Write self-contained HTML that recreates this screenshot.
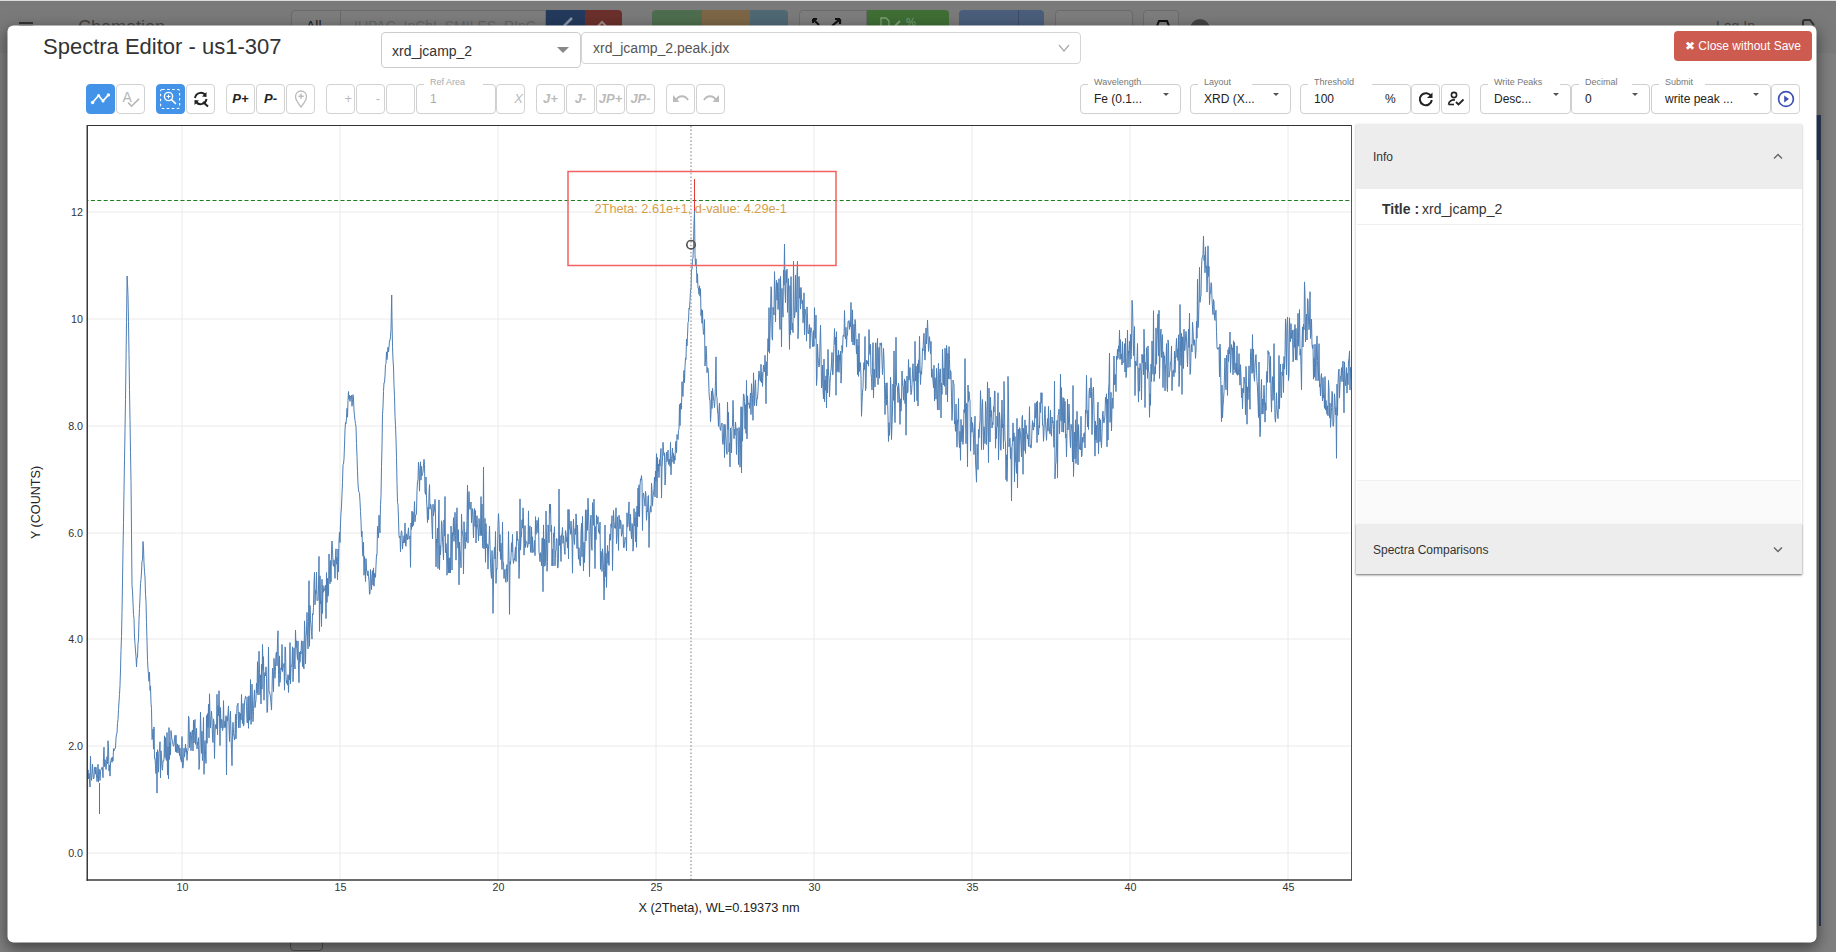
<!DOCTYPE html>
<html><head><meta charset="utf-8">
<style>
*{box-sizing:border-box;margin:0;padding:0}
html,body{width:1836px;height:952px;overflow:hidden}
body{position:relative;background:#7f7f7f;font-family:"Liberation Sans",sans-serif;color:#333}
.a{position:absolute}
.nav{left:0;top:0;width:1836px;height:53px;background:#7a7a7a;border-top:1px solid #dcdcdc}
.modal{left:7px;top:25px;width:1809px;height:917px;transform:translate(0.5px,0.5px);background:#fff;border-radius:6px;box-shadow:0 5px 15px rgba(0,0,0,.5)}
.title{left:43px;top:34px;font-size:22px;line-height:26px;color:#333;white-space:nowrap}
.sel{border:1px solid #ccc;border-radius:4px;background:#fff}
.btn{width:29px;height:30px;border:1px solid #d2d2d2;border-radius:4px;background:#fff;display:flex;align-items:center;justify-content:center}
.btn.on{background:#4394e9;border-color:#4394e9}
.dis{color:#bdbdbd}
.fld{height:30px;border:1px solid #cfcfcf;border-radius:4px;background:#fff}
.lg{position:absolute;top:-7px;font-size:9px;line-height:10px;color:#777;white-space:nowrap}
.gap{position:absolute;top:-2px;height:3px;background:#fff}
.val{position:absolute;top:7px;font-size:12px;line-height:14px;color:#222;white-space:nowrap}
.car{position:absolute;top:8px;width:0;height:0;border-left:3.5px solid transparent;border-right:3.5px solid transparent;border-top:3.5px solid #555}
.ylab{font-size:11px;color:#333;text-align:right;width:40px;line-height:12px}
.xlab{font-size:11px;color:#333;text-align:center;width:40px;line-height:12px}
</style></head><body>
<!-- dimmed background navbar -->
<div class="a nav"></div>
<div class="a" style="left:19px;top:22px;width:14px;height:2px;background:#333;box-shadow:0 3px 0 #333"></div>
<div class="a" style="left:78px;top:17px;font-size:18px;color:#444;line-height:20px">Chemotion</div>
<div class="a" style="left:291px;top:10px;width:255px;height:20px;background:#7d7d7d;border:1px solid #6a6a6a;border-radius:4px 0 0 4px"></div>
<div class="a" style="left:340px;top:10px;width:1px;height:20px;background:#6a6a6a"></div>
<div class="a" style="left:306px;top:18px;font-size:14px;color:#222">All</div>
<div class="a" style="left:354px;top:18px;font-size:14px;color:#666">IUPAC, InChI, SMILES, RInC</div>
<div class="a" style="left:546px;top:10px;width:39px;height:20px;background:#233a5c"></div>
<div class="a" style="left:585px;top:10px;width:37px;height:20px;background:#6b302b;border-radius:0 4px 4px 0"></div>
<div class="a" style="left:652px;top:10px;width:50px;height:20px;background:#4e6d4e;border-radius:4px 0 0 4px"></div>
<div class="a" style="left:702px;top:10px;width:48px;height:20px;background:#7c6646"></div>
<div class="a" style="left:750px;top:10px;width:38px;height:20px;background:#4f6873;border-radius:0 4px 4px 0"></div>
<div class="a" style="left:799px;top:10px;width:68px;height:20px;background:#7d7d7d;border:1px solid #6a6a6a;border-radius:4px 0 0 4px"></div>
<div class="a" style="left:867px;top:10px;width:82px;height:20px;background:#3f6e34;border-radius:0 4px 4px 0"></div>
<div class="a" style="left:959px;top:10px;width:85px;height:20px;background:#4a5e7b;border-radius:4px"></div>
<div class="a" style="left:1018px;top:10px;width:1px;height:20px;background:#3d4d66"></div>
<div class="a" style="left:1055px;top:10px;width:78px;height:20px;background:#7d7d7d;border:1px solid #6a6a6a;border-radius:4px"></div>
<div class="a" style="left:1143px;top:10px;width:36px;height:20px;background:#7d7d7d;border:1px solid #6a6a6a;border-radius:4px"></div>
<div class="a" style="left:1190px;top:19px;width:20px;height:20px;background:#444;border-radius:50%"></div>
<div class="a" style="left:1716px;top:18px;font-size:14px;color:#444">Log In</div>
<svg class="a" style="left:560px;top:14px" width="20" height="12" viewBox="0 0 20 12"><path d="M4 12 L12 4" stroke="#8a96a8" stroke-width="2.5"/></svg>
<svg class="a" style="left:596px;top:18px" width="12" height="8" viewBox="0 0 12 8"><path d="M2 8 L6 4 L10 8" stroke="#a08a88" stroke-width="2" fill="none"/></svg>
<svg class="a" style="left:812px;top:17px" width="32" height="9" viewBox="0 0 32 9"><path d="M1 2 L7 8 M1 2 V6 M1 2 H5" stroke="#111" stroke-width="2"/><path d="M20 9 L28 2 M28 2 V7 M28 2 H23" stroke="#111" stroke-width="2.2"/></svg>
<svg class="a" style="left:880px;top:17px" width="45" height="9" viewBox="0 0 45 9"><path d="M1 9 V1 H6 L9 4 V9" stroke="#7fa07a" stroke-width="1.3" fill="none"/><path d="M15 9 L20 4" stroke="#7fa07a" stroke-width="2"/><text x="26" y="9" font-family="Liberation Sans" font-size="11" fill="#7fa07a">%</text></svg>
<svg class="a" style="left:1155px;top:20px" width="16" height="6" viewBox="0 0 16 6"><path d="M2 6 L4 1 H12 L14 6" stroke="#111" stroke-width="2" fill="none"/></svg>
<svg class="a" style="left:1800px;top:19px" width="16" height="8" viewBox="0 0 16 8"><path d="M3 8 V3 Q3 1 5 1 H10 L14 6" stroke="#333" stroke-width="2" fill="none"/></svg>
<!-- right blue panel behind -->
<div class="a" style="left:1812px;top:115px;width:9px;height:811px;border-right:2px solid #2a3d5c;background:#7a7a7a"></div>
<div class="a" style="left:1812px;top:115px;width:9px;height:45px;background:#2a3d5c;border-radius:0 4px 0 0"></div>
<div class="a" style="left:290px;top:938px;width:33px;height:13px;border:1px solid #505050;border-radius:0 0 4px 4px"></div>

<div class="a modal"></div>
<div class="a title">Spectra Editor - us1-307</div>

<div class="a sel" style="left:381px;top:32px;width:200px;height:36px"><div class="val" style="left:10px;top:10px;font-size:14px;line-height:16px;color:#333">xrd_jcamp_2</div><div class="car" style="left:175px;top:14px;border-left-width:6px;border-right-width:6px;border-top-width:6px;border-top-color:#888"></div></div>
<div class="a sel" style="left:581px;top:32px;width:500px;height:32px;border-color:#d5d5d5"><div class="val" style="left:11px;top:7px;font-size:14px;line-height:16px;color:#555">xrd_jcamp_2.peak.jdx</div>
<svg class="a" style="left:476px;top:11px" width="12" height="9" viewBox="0 0 12 9"><path d="M1 1 L6 7 L11 1" fill="none" stroke="#aaa" stroke-width="1.2"/></svg></div>

<div class="a" style="left:1674px;top:31px;width:138px;height:30px;background:#cd5b50;border-radius:4px;color:#fff;font-size:12px;line-height:30px;text-align:center;white-space:nowrap">&#10006; Close without Save</div>

<div class="a btn on" style="left:86px;top:84px"><svg width="27" height="28" viewBox="0 0 27 28" style="position:absolute;left:0;top:0"><path d="M5.6 17.5 L11.6 10.5 L16 16 L21.4 9.9" fill="none" stroke="#fff" stroke-width="1.7" stroke-linejoin="round"/><circle cx="5.6" cy="17.5" r="1.7" fill="#fff"/><circle cx="11.6" cy="10.5" r="1.5" fill="#fff"/><circle cx="16" cy="16" r="1.5" fill="#fff"/><circle cx="21.4" cy="9.9" r="1.7" fill="#fff"/></svg></div>
<div class="a btn " style="left:116px;top:84px"><svg width="27" height="28" viewBox="0 0 27 28" style="position:absolute;left:0;top:0"><text x="5.6" y="16.8" font-family="Liberation Sans" font-size="14" fill="#b5b5b5">A</text><path d="M11.2 17.6 L14.6 21.2 L22 13.9" fill="none" stroke="#b5b5b5" stroke-width="1.6"/></svg></div>
<div class="a btn on" style="left:156px;top:84px"><svg width="27" height="28" viewBox="0 0 27 28" style="position:absolute;left:0;top:0"><rect x="3.6" y="4.5" width="19" height="19" rx="1.5" fill="none" stroke="#fff" stroke-width="1.1" stroke-dasharray="2.6 2.4"/><circle cx="11.5" cy="11.5" r="4.1" fill="none" stroke="#fff" stroke-width="1.4"/><path d="M14.4 14.6 L18.9 18.9" stroke="#fff" stroke-width="1.5"/><path d="M11.5 9.6 V13.4 M9.6 11.5 H13.4" stroke="#fff" stroke-width="1"/></svg></div>
<div class="a btn " style="left:186px;top:84px"><svg width="20" height="20" viewBox="0 0 20 20"><path d="M4 9 A6 6 0 0 1 14.5 6" fill="none" stroke="#222" stroke-width="2"/><path d="M15.5 3 L15.5 8 L11 7.5 Z" fill="#222"/><path d="M15.5 10 A6 6 0 0 1 5 13" fill="none" stroke="#222" stroke-width="2"/><path d="M3.5 16 L3.5 11 L8 11.5 Z" fill="#222"/><path d="M12 13 L17 17.5" stroke="#222" stroke-width="2"/></svg></div>
<div class="a btn " style="left:226px;top:84px"><span style="position:relative;top:-1px;font-size:13px;color:#222;font-style:italic;font-weight:bold;white-space:nowrap">P+</span></div>
<div class="a btn " style="left:256px;top:84px"><span style="position:relative;top:-1px;font-size:13px;color:#222;font-style:italic;font-weight:bold;white-space:nowrap">P-</span></div>
<div class="a btn " style="left:286px;top:84px"><svg width="16" height="20" viewBox="0 0 16 20"><path d="M8 18 C4 13 2.5 10.5 2.5 7.5 A5.5 5.5 0 0 1 13.5 7.5 C13.5 10.5 12 13 8 18 Z" fill="none" stroke="#bbb" stroke-width="1.3"/><path d="M8 4.5 V10 M5.3 7.3 H10.7" stroke="#bbb" stroke-width="1.4"/></svg></div>
<div class="a btn" style="left:326px;top:84px;justify-content:flex-end;padding-right:2px"><span style="position:relative;top:-1px;font-size:13px;color:#bbb;font-style:normal;font-weight:normal;white-space:nowrap">+</span></div>
<div class="a btn" style="left:356px;top:84px;justify-content:flex-end;padding-right:4px"><span style="position:relative;top:-1px;font-size:13px;color:#bbb;font-style:normal;font-weight:normal;white-space:nowrap">-</span></div>
<div class="a btn " style="left:386px;top:84px"></div>
<div class="a fld" style="left:416px;top:84px;width:80px"><div class="gap" style="left:7px;width:58.5px"></div><div class="lg" style="left:13px;top:-8px;color:#aaa">Ref Area</div><div class="val" style="left:13px;top:7px;color:#aaa">1</div></div>
<div class="a btn" style="left:496px;top:84px;justify-content:flex-end;padding-right:1px"><span style="position:relative;top:-1px;font-size:13px;color:#bbb;font-style:italic;font-weight:normal;white-space:nowrap">X</span></div>
<div class="a btn " style="left:536px;top:84px"><span style="position:relative;top:-1px;font-size:13px;color:#bbb;font-style:italic;font-weight:bold;white-space:nowrap">J+</span></div>
<div class="a btn " style="left:566px;top:84px"><span style="position:relative;top:-1px;font-size:13px;color:#bbb;font-style:italic;font-weight:bold;white-space:nowrap">J-</span></div>
<div class="a btn " style="left:596px;top:84px"><span style="position:relative;top:-1px;font-size:13px;color:#bbb;font-style:italic;font-weight:bold;white-space:nowrap">JP+</span></div>
<div class="a btn " style="left:626px;top:84px"><span style="position:relative;top:-1px;font-size:13px;color:#bbb;font-style:italic;font-weight:bold;white-space:nowrap">JP-</span></div>
<div class="a btn " style="left:666px;top:84px"><svg width="20" height="12" viewBox="0 0 20 12"><path d="M5 7 C8 2 14 2 17 7" fill="none" stroke="#bbb" stroke-width="2"/><path d="M2 2 L2 9 L8.5 9 Z" fill="#bbb"/></svg></div>
<div class="a btn " style="left:696px;top:84px"><svg width="20" height="12" viewBox="0 0 20 12"><path d="M15 7 C12 2 6 2 3 7" fill="none" stroke="#bbb" stroke-width="2"/><path d="M18 2 L18 9 L11.5 9 Z" fill="#bbb"/></svg></div>
<div class="a fld" style="left:1080px;top:84px;width:101px"><div class="gap" style="left:7px;width:53.4px"></div><div class="lg" style="left:13px;top:-8px;color:#777">Wavelength</div><div class="val" style="left:13px;top:7px;color:#222">Fe (0.1...</div><div class="car" style="left:82px;top:7.5px"></div></div>
<div class="a fld" style="left:1190px;top:84px;width:101px"><div class="gap" style="left:7px;width:53.7px"></div><div class="lg" style="left:13px;top:-8px;color:#777">Layout</div><div class="val" style="left:13px;top:7px;color:#222">XRD (X...</div><div class="car" style="left:82px;top:7.5px"></div></div>
<div class="a fld" style="left:1300px;top:84px;width:111px"><div class="gap" style="left:7px;width:64.1px"></div><div class="lg" style="left:13px;top:-8px;color:#777">Threshold</div><div class="val" style="left:13px;top:7px;color:#222">100</div><div class="val" style="left:84px;top:7px">%</div></div>
<div class="a btn " style="left:1411px;top:84px"><svg width="18" height="18" viewBox="0 0 18 18"><path d="M14.2 6.5 A6 6 0 1 0 14.8 10" fill="none" stroke="#222" stroke-width="2"/><path d="M15.5 2.5 V8 H10 Z" fill="#222"/></svg></div>
<div class="a btn " style="left:1441px;top:84px"><svg width="18" height="16" viewBox="0 0 18 16"><circle cx="7" cy="4" r="2.6" fill="none" stroke="#222" stroke-width="1.6"/><path d="M1.5 13.5 C2 10 5 8.5 8 9" fill="none" stroke="#222" stroke-width="1.6"/><path d="M1.5 13.5 H7" stroke="#222" stroke-width="1.6"/><path d="M9 11 L11.5 13.5 L16.5 8.5" fill="none" stroke="#222" stroke-width="1.8"/></svg></div>
<div class="a fld" style="left:1480px;top:84px;width:91px"><div class="gap" style="left:7px;width:72px"></div><div class="lg" style="left:13px;top:-8px;color:#777">Write Peaks</div><div class="val" style="left:13px;top:7px;color:#222">Desc...</div><div class="car" style="left:72px;top:7.5px"></div></div>
<div class="a fld" style="left:1571px;top:84px;width:79px"><div class="gap" style="left:7px;width:53px"></div><div class="lg" style="left:13px;top:-8px;color:#777">Decimal</div><div class="val" style="left:13px;top:7px;color:#222">0</div><div class="car" style="left:60px;top:7.5px"></div></div>
<div class="a fld" style="left:1651px;top:84px;width:120px"><div class="gap" style="left:7px;width:46.2px"></div><div class="lg" style="left:13px;top:-8px;color:#777">Submit</div><div class="val" style="left:13px;top:7px;color:#222">write peak ...</div><div class="car" style="left:101px;top:7.5px"></div></div>
<div class="a btn " style="left:1771px;top:84px"><svg width="20" height="20" viewBox="0 0 20 20"><circle cx="10" cy="10" r="7.4" fill="none" stroke="#3f51b5" stroke-width="1.7"/><path d="M8.2 6.6 L13 10 L8.2 13.4 Z" fill="#3f51b5"/></svg></div>

<svg class="a" style="left:0;top:0" width="1836" height="952" viewBox="0 0 1836 952">
<line x1="87" y1="212" x2="1352" y2="212" stroke="#eaeaea" stroke-width="1"/>
<line x1="87" y1="319" x2="1352" y2="319" stroke="#eaeaea" stroke-width="1"/>
<line x1="87" y1="426" x2="1352" y2="426" stroke="#eaeaea" stroke-width="1"/>
<line x1="87" y1="533" x2="1352" y2="533" stroke="#eaeaea" stroke-width="1"/>
<line x1="87" y1="639" x2="1352" y2="639" stroke="#eaeaea" stroke-width="1"/>
<line x1="87" y1="746" x2="1352" y2="746" stroke="#eaeaea" stroke-width="1"/>
<line x1="87" y1="853" x2="1352" y2="853" stroke="#eaeaea" stroke-width="1"/>
<line x1="182" y1="126" x2="182" y2="880" stroke="#eaeaea" stroke-width="1"/>
<line x1="340" y1="126" x2="340" y2="880" stroke="#eaeaea" stroke-width="1"/>
<line x1="498" y1="126" x2="498" y2="880" stroke="#eaeaea" stroke-width="1"/>
<line x1="656" y1="126" x2="656" y2="880" stroke="#eaeaea" stroke-width="1"/>
<line x1="814" y1="126" x2="814" y2="880" stroke="#eaeaea" stroke-width="1"/>
<line x1="972" y1="126" x2="972" y2="880" stroke="#eaeaea" stroke-width="1"/>
<line x1="1130" y1="126" x2="1130" y2="880" stroke="#eaeaea" stroke-width="1"/>
<line x1="1288" y1="126" x2="1288" y2="880" stroke="#eaeaea" stroke-width="1"/>
<text x="83" y="215.6" text-anchor="end" font-family="Liberation Sans" font-size="10.7" fill="#333">12</text>
<text x="83" y="322.6" text-anchor="end" font-family="Liberation Sans" font-size="10.7" fill="#333">10</text>
<text x="83" y="429.6" text-anchor="end" font-family="Liberation Sans" font-size="10.7" fill="#333">8.0</text>
<text x="83" y="536.6" text-anchor="end" font-family="Liberation Sans" font-size="10.7" fill="#333">6.0</text>
<text x="83" y="642.6" text-anchor="end" font-family="Liberation Sans" font-size="10.7" fill="#333">4.0</text>
<text x="83" y="749.6" text-anchor="end" font-family="Liberation Sans" font-size="10.7" fill="#333">2.0</text>
<text x="83" y="856.6" text-anchor="end" font-family="Liberation Sans" font-size="10.7" fill="#333">0.0</text>
<text x="182.5" y="891" text-anchor="middle" font-family="Liberation Sans" font-size="10.7" fill="#333">10</text>
<text x="340.5" y="891" text-anchor="middle" font-family="Liberation Sans" font-size="10.7" fill="#333">15</text>
<text x="498.5" y="891" text-anchor="middle" font-family="Liberation Sans" font-size="10.7" fill="#333">20</text>
<text x="656.5" y="891" text-anchor="middle" font-family="Liberation Sans" font-size="10.7" fill="#333">25</text>
<text x="814.5" y="891" text-anchor="middle" font-family="Liberation Sans" font-size="10.7" fill="#333">30</text>
<text x="972.5" y="891" text-anchor="middle" font-family="Liberation Sans" font-size="10.7" fill="#333">35</text>
<text x="1130.5" y="891" text-anchor="middle" font-family="Liberation Sans" font-size="10.7" fill="#333">40</text>
<text x="1288.5" y="891" text-anchor="middle" font-family="Liberation Sans" font-size="10.7" fill="#333">45</text>
<text x="719" y="912" text-anchor="middle" font-family="Liberation Sans" font-size="12.75" fill="#222">X (2Theta), WL=0.19373 nm</text>
<text transform="translate(39.5,502.5) rotate(-90)" text-anchor="middle" font-family="Liberation Sans" font-size="12.6" fill="#222">Y (COUNTS)</text>
<line x1="87" y1="200.5" x2="1352" y2="200.5" stroke="#1d7d1d" stroke-width="1.2" stroke-dasharray="4 2.4" stroke-dashoffset="2.5"/>
<path d="M87.5 778.9 L88.0 769.9 L88.5 778.9 L89.0 773.4 L89.5 779.6 L90.0 787.0 L90.5 756.0 L91.0 776.1 L91.5 780.4 L92.0 774.3 L92.5 764.1 L93.0 773.4 L93.5 778.9 L94.0 778.0 L94.5 768.0 L95.0 766.9 L95.5 774.2 L96.0 767.3 L96.5 776.0 L97.0 781.6 L97.5 778.7 L98.0 764.3 L98.5 782.2 L99.0 769.1 L99.5 770.4 L100.0 780.5 L100.5 771.4 L101.0 769.7 L101.5 769.1 L102.0 767.2 L102.5 769.1 L103.0 777.7 L103.5 756.7 L104.0 747.2 L104.5 766.6 L105.0 759.6 L105.5 762.6 L106.0 769.5 L106.5 763.6 L107.0 756.8 L107.5 763.7 L108.0 740.7 L108.5 747.7 L109.0 770.9 L109.5 765.2 L110.0 776.1 L110.5 762.9 L111.0 760.5 L111.5 757.8 L112.0 762.4 L112.5 757.2 L113.0 761.0 L113.5 748.6 L114.0 750.9 L114.5 749.5 L115.0 748.1 L115.5 748.1 L116.0 738.2 L116.5 734.1 L117.0 733.1 L117.5 723.4 L118.0 719.6 L118.5 709.5 L119.0 702.1 L119.5 694.4 L120.0 685.4 L120.5 670.0 L121.0 650.4 L121.5 636.6 L122.0 611.7 L122.5 582.1 L123.0 549.4 L123.5 522.4 L124.0 490.4 L124.5 459.8 L125.0 430.4 L125.5 399.3 L126.0 361.2 L126.5 322.5 L127.1 276.0 L127.5 283.7 L128.0 295.6 L128.5 321.7 L129.0 354.4 L129.5 389.3 L130.0 420.4 L130.5 452.3 L131.0 480.5 L131.5 533.4 L132.0 585.4 L132.5 591.1 L133.0 602.5 L133.5 614.5 L134.0 618.8 L134.5 637.0 L135.0 643.7 L135.5 650.9 L136.0 656.5 L136.5 666.9 L137.0 657.4 L137.5 657.3 L138.0 643.7 L138.5 639.1 L139.0 619.5 L139.5 608.6 L140.0 597.3 L140.5 583.7 L141.0 579.5 L141.5 572.0 L142.0 561.3 L142.5 559.8 L143.0 541.5 L143.5 547.9 L144.0 563.0 L144.5 571.4 L145.0 577.0 L145.5 594.2 L146.0 601.3 L146.5 622.7 L147.0 640.9 L147.5 660.3 L148.0 668.8 L148.5 674.9 L149.0 681.3 L149.5 672.2 L150.0 690.4 L150.5 685.9 L151.0 702.9 L151.5 708.3 L152.0 739.5 L152.5 737.7 L153.0 729.1 L153.5 749.1 L154.0 726.9 L154.5 758.7 L155.0 758.2 L155.5 765.7 L156.0 773.6 L156.5 752.2 L157.0 793.1 L157.5 749.7 L158.0 754.1 L158.5 772.2 L159.0 751.8 L159.5 751.1 L160.0 741.8 L160.5 777.9 L161.0 750.7 L161.5 756.7 L162.0 767.6 L162.5 770.2 L163.0 760.8 L163.5 761.4 L164.0 758.9 L164.5 735.8 L165.0 757.5 L165.5 737.6 L166.0 759.1 L166.5 760.5 L167.0 732.5 L167.5 775.1 L168.0 746.9 L168.5 778.9 L169.0 727.6 L169.5 759.4 L170.0 742.1 L170.5 754.8 L171.0 730.6 L171.5 736.1 L172.0 739.7 L172.5 741.1 L173.0 744.8 L173.5 746.3 L174.0 744.8 L174.5 737.7 L175.0 735.3 L175.5 751.6 L176.0 735.3 L176.5 752.4 L177.0 751.0 L177.5 743.9 L178.0 753.1 L178.5 745.4 L179.0 744.9 L179.5 755.7 L180.0 747.9 L180.5 759.4 L181.0 759.9 L181.5 762.2 L182.0 736.5 L182.5 767.8 L183.0 768.2 L183.5 762.3 L184.0 748.2 L184.5 757.1 L185.0 752.2 L185.5 744.0 L186.0 752.2 L186.5 748.6 L187.0 760.4 L187.5 751.1 L188.0 750.7 L188.5 716.1 L189.0 718.3 L189.5 747.6 L190.0 734.5 L190.5 731.9 L191.0 750.7 L191.5 735.5 L192.0 731.5 L192.5 730.1 L193.0 751.0 L193.5 720.1 L194.0 743.0 L194.5 723.8 L195.0 719.5 L195.5 744.4 L196.0 735.6 L196.5 728.4 L197.0 748.9 L197.5 742.2 L198.0 744.3 L198.5 737.7 L199.0 769.5 L199.5 764.5 L200.0 744.8 L200.5 712.2 L201.0 733.2 L201.5 753.3 L202.0 731.3 L202.5 760.5 L203.0 740.1 L203.5 717.5 L204.0 774.3 L204.5 751.9 L205.0 740.6 L205.5 754.1 L206.0 763.4 L206.5 715.5 L207.0 743.3 L207.5 713.6 L208.0 727.4 L208.5 704.3 L209.0 737.9 L209.5 693.8 L210.0 715.8 L210.5 728.1 L211.0 718.7 L211.5 711.2 L212.0 719.8 L212.5 737.1 L213.0 742.5 L213.5 718.9 L214.0 722.7 L214.5 758.5 L215.0 733.0 L215.5 724.6 L216.0 728.7 L216.5 728.6 L217.0 694.3 L217.5 734.7 L218.0 705.8 L218.5 715.7 L219.0 690.7 L219.5 713.5 L220.0 745.6 L220.5 707.5 L221.0 728.0 L221.5 719.5 L222.0 719.5 L222.5 730.6 L223.0 727.9 L223.5 700.7 L224.0 727.8 L224.5 726.4 L225.0 720.9 L225.5 727.4 L226.0 715.7 L226.5 775.0 L227.0 717.1 L227.5 721.1 L228.0 713.1 L228.5 705.9 L229.0 725.9 L229.5 741.5 L230.0 719.8 L230.5 711.2 L231.0 735.4 L231.5 749.4 L232.0 765.7 L232.5 732.5 L233.0 722.3 L233.5 733.3 L234.0 736.4 L234.5 740.1 L235.0 733.6 L235.5 714.1 L236.0 738.9 L236.5 720.6 L237.0 705.4 L237.5 705.4 L238.0 703.2 L238.5 728.0 L239.0 712.1 L239.5 714.4 L240.0 727.8 L240.5 713.5 L241.0 719.9 L241.5 694.5 L242.0 717.2 L242.5 723.5 L243.0 703.5 L243.5 726.1 L244.0 724.5 L244.5 700.6 L245.0 699.2 L245.5 696.3 L246.0 696.6 L246.5 706.4 L247.0 722.4 L247.5 722.9 L248.0 696.8 L248.5 728.3 L249.0 695.8 L249.5 720.3 L250.0 719.4 L250.5 679.6 L251.0 724.4 L251.5 715.6 L252.0 684.2 L252.5 705.1 L253.0 721.6 L253.5 711.4 L254.0 698.9 L254.5 689.9 L255.0 707.6 L255.5 703.9 L256.0 699.6 L256.5 683.0 L257.0 693.0 L257.5 661.7 L258.0 695.0 L258.5 683.5 L259.0 651.2 L259.5 672.3 L260.0 694.8 L260.5 674.9 L261.0 703.9 L261.5 664.3 L262.0 689.2 L262.5 644.5 L263.0 670.1 L263.5 656.7 L264.0 700.2 L264.5 674.5 L265.0 672.5 L265.5 676.0 L266.0 666.9 L266.5 678.8 L267.0 712.5 L267.5 711.8 L268.0 690.3 L268.5 647.1 L269.0 691.1 L269.5 692.0 L270.0 694.1 L270.5 697.2 L271.0 702.9 L271.5 710.1 L272.0 690.6 L272.5 668.1 L273.0 673.9 L273.5 691.8 L274.0 658.4 L274.5 671.6 L275.0 678.2 L275.5 666.6 L276.0 653.9 L276.5 652.0 L277.0 665.9 L277.5 641.1 L278.0 630.8 L278.5 674.5 L279.0 686.5 L279.5 655.9 L280.0 682.3 L280.5 675.6 L281.0 667.9 L281.5 670.0 L282.0 644.5 L282.5 671.6 L283.0 667.3 L283.5 665.7 L284.0 663.5 L284.5 690.2 L285.0 646.9 L285.5 647.8 L286.0 676.7 L286.5 683.3 L287.0 680.3 L287.5 685.1 L288.0 674.6 L288.5 692.5 L289.0 675.7 L289.5 679.8 L290.0 642.6 L290.5 683.9 L291.0 667.6 L291.5 665.8 L292.0 664.0 L292.5 646.8 L293.0 681.7 L293.5 668.5 L294.0 647.8 L294.5 664.6 L295.0 669.0 L295.5 630.0 L296.0 647.6 L296.5 640.8 L297.0 653.3 L297.5 659.6 L298.0 640.9 L298.5 669.2 L299.0 682.7 L299.5 652.3 L300.0 662.2 L300.5 651.3 L301.0 654.0 L301.5 640.8 L302.0 647.2 L302.5 666.5 L303.0 640.9 L303.5 667.0 L304.0 668.9 L304.5 620.9 L305.0 634.4 L305.5 663.9 L306.0 638.0 L306.5 630.9 L307.0 612.4 L307.5 636.8 L308.0 648.9 L308.5 621.4 L309.0 580.7 L309.5 646.3 L310.0 605.5 L310.5 619.6 L311.0 625.0 L311.5 631.6 L312.0 639.1 L312.5 613.7 L313.0 615.0 L313.5 607.3 L314.0 583.0 L314.5 572.3 L315.0 604.8 L315.5 590.3 L316.0 593.7 L316.5 572.1 L317.0 600.7 L317.5 600.3 L318.0 600.5 L318.5 587.0 L319.0 556.4 L319.5 631.4 L320.0 575.8 L320.5 604.0 L321.0 600.7 L321.5 626.6 L322.0 579.3 L322.5 613.4 L323.0 585.5 L323.5 592.2 L324.0 589.7 L324.5 590.3 L325.0 586.6 L325.5 585.1 L326.0 618.6 L326.5 572.6 L327.0 602.4 L327.5 578.4 L328.0 596.3 L328.5 593.1 L329.0 554.0 L329.5 575.4 L330.0 583.8 L330.5 560.6 L331.0 581.8 L331.5 551.1 L332.0 541.0 L332.5 549.6 L333.0 564.0 L333.5 566.3 L334.0 559.8 L334.5 563.5 L335.0 578.4 L335.5 555.7 L336.0 548.8 L336.5 564.2 L337.0 557.6 L337.5 580.0 L338.0 549.0 L338.5 571.8 L339.0 540.5 L339.5 532.0 L340.0 542.6 L340.5 523.9 L341.0 512.7 L341.5 506.1 L342.0 493.8 L342.5 482.8 L343.0 464.8 L343.5 464.1 L344.0 458.9 L344.5 445.0 L345.0 429.9 L345.5 422.6 L346.0 423.6 L346.5 417.8 L347.0 408.3 L347.5 417.2 L348.0 400.4 L348.5 391.5 L349.0 399.3 L349.5 395.1 L350.0 401.4 L350.5 396.1 L351.0 396.6 L351.5 395.3 L352.0 406.2 L352.5 399.6 L353.0 394.7 L353.5 399.0 L354.0 411.0 L354.5 415.9 L355.0 420.5 L355.5 423.7 L356.0 426.9 L356.5 443.6 L357.0 456.5 L357.5 471.2 L358.0 483.9 L358.5 489.9 L359.0 492.3 L359.5 493.2 L360.0 501.7 L360.5 511.4 L361.0 521.2 L361.5 537.0 L362.0 531.2 L362.5 550.1 L363.0 556.3 L363.5 542.2 L364.0 575.2 L364.5 556.5 L365.0 567.3 L365.5 581.5 L366.0 558.6 L366.5 570.1 L367.0 571.8 L367.5 575.5 L368.0 570.8 L368.5 576.2 L369.0 580.8 L369.5 594.3 L370.0 593.3 L370.5 569.5 L371.0 578.2 L371.5 589.7 L372.0 577.2 L372.5 570.6 L373.0 585.0 L373.5 567.9 L374.0 586.2 L374.5 573.4 L375.0 577.6 L375.5 577.2 L376.0 565.1 L376.5 554.9 L377.0 555.3 L377.5 526.4 L378.0 532.4 L378.5 537.8 L379.0 515.2 L379.5 527.6 L380.0 532.9 L380.5 504.7 L381.0 495.8 L381.5 466.6 L382.0 446.1 L382.5 414.5 L383.0 406.9 L383.5 391.4 L384.0 382.5 L384.5 382.7 L385.0 375.9 L385.5 364.7 L386.0 363.4 L386.5 351.9 L387.0 359.6 L387.5 352.9 L388.0 347.2 L388.5 352.1 L389.0 347.2 L389.5 340.5 L390.0 340.7 L390.5 336.1 L391.0 329.5 L391.7 295.0 L392.0 318.5 L392.5 346.8 L393.0 359.9 L393.5 367.0 L394.0 385.5 L394.5 396.2 L395.0 416.5 L395.5 425.4 L396.0 439.0 L396.5 457.6 L397.0 483.4 L397.5 502.5 L398.0 504.4 L398.5 519.1 L399.0 535.9 L399.5 538.0 L400.0 536.0 L400.5 551.8 L401.0 534.0 L401.5 530.8 L402.0 533.1 L402.5 549.1 L403.0 541.5 L403.5 542.9 L404.0 535.7 L404.5 542.6 L405.0 523.0 L405.5 545.5 L406.0 546.3 L406.5 533.9 L407.0 536.3 L407.5 539.7 L408.0 533.0 L408.5 527.8 L409.0 539.1 L409.5 537.2 L410.0 535.8 L410.5 567.3 L411.0 523.0 L411.5 529.4 L412.0 511.1 L412.5 526.8 L413.0 512.3 L413.5 525.3 L414.0 515.6 L414.5 501.5 L415.0 521.7 L415.5 515.2 L416.0 515.2 L416.5 513.8 L417.0 490.9 L417.5 481.2 L418.0 480.0 L418.5 462.1 L419.0 470.8 L419.5 491.2 L420.0 470.1 L420.5 461.8 L421.0 480.1 L421.5 466.4 L422.0 475.8 L422.5 473.6 L423.0 472.4 L423.5 465.1 L424.0 459.3 L424.5 464.7 L425.0 491.9 L425.5 494.4 L426.0 477.0 L426.5 498.7 L427.0 508.3 L427.5 522.5 L428.0 507.1 L428.5 519.5 L429.0 493.8 L429.5 484.6 L430.0 509.2 L430.5 504.1 L431.0 505.1 L431.5 511.1 L432.0 527.1 L432.5 539.0 L433.0 504.2 L433.5 515.9 L434.0 512.3 L434.5 508.9 L435.0 499.4 L435.5 513.8 L436.0 566.8 L436.5 539.2 L437.0 542.2 L437.5 528.1 L438.0 568.5 L438.5 521.1 L439.0 499.9 L439.5 569.7 L440.0 545.4 L440.5 554.9 L441.0 542.6 L441.5 520.8 L442.0 523.9 L442.5 540.0 L443.0 548.3 L443.5 559.8 L444.0 519.9 L444.5 536.1 L445.0 496.5 L445.5 552.7 L446.0 543.4 L446.5 551.1 L447.0 575.2 L447.5 561.4 L448.0 534.1 L448.5 573.0 L449.0 558.1 L449.5 572.6 L450.0 557.6 L450.5 573.0 L451.0 526.1 L451.5 539.7 L452.0 570.0 L452.5 532.6 L453.0 535.3 L453.5 517.7 L454.0 541.4 L454.5 530.1 L455.0 512.3 L455.5 535.7 L456.0 560.1 L456.5 522.2 L457.0 507.8 L457.5 538.1 L458.0 548.3 L458.5 529.7 L459.0 584.8 L459.5 542.0 L460.0 550.3 L460.5 555.7 L461.0 567.8 L461.5 514.2 L462.0 529.2 L462.5 533.1 L463.0 537.0 L463.5 574.0 L464.0 521.7 L464.5 536.3 L465.0 548.8 L465.5 547.9 L466.0 532.1 L466.5 541.5 L467.0 520.5 L467.5 485.1 L468.0 543.1 L468.5 505.8 L469.0 491.6 L469.5 506.5 L470.0 509.5 L470.5 508.5 L471.0 502.0 L471.5 522.7 L472.0 508.7 L472.5 508.8 L473.0 522.1 L473.5 538.0 L474.0 511.8 L474.5 508.5 L475.0 526.7 L475.5 510.5 L476.0 543.0 L476.5 523.6 L477.0 515.7 L477.5 527.6 L478.0 529.2 L478.5 540.7 L479.0 518.5 L479.5 523.6 L480.0 535.8 L480.5 533.0 L481.0 496.6 L481.5 535.5 L482.0 504.1 L482.5 542.4 L483.0 548.2 L483.5 467.0 L484.0 548.8 L484.5 539.4 L485.0 518.4 L485.5 562.3 L486.0 523.6 L486.5 547.8 L487.0 543.7 L487.5 546.6 L488.0 569.1 L488.5 547.0 L489.0 543.2 L489.5 526.1 L490.0 545.2 L490.5 562.1 L491.0 573.7 L491.5 578.4 L492.0 550.5 L492.5 563.1 L493.0 613.4 L493.5 578.7 L494.0 554.4 L494.5 547.2 L495.0 559.0 L495.5 531.5 L496.0 583.4 L496.5 568.4 L497.0 569.2 L497.5 551.7 L498.0 525.3 L498.5 513.6 L499.0 523.6 L499.5 551.3 L500.0 534.5 L500.5 559.4 L501.0 543.1 L501.5 555.0 L502.0 569.5 L502.5 522.0 L503.0 563.2 L503.5 562.8 L504.0 578.5 L504.5 572.0 L505.0 569.3 L505.5 581.7 L506.0 582.4 L506.5 567.7 L507.0 564.5 L507.5 581.5 L508.0 564.6 L508.5 531.5 L509.0 557.2 L509.5 614.4 L510.0 561.7 L510.5 564.3 L511.0 556.7 L511.5 542.8 L512.0 552.1 L512.5 534.4 L513.0 558.9 L513.5 563.4 L514.0 559.0 L514.5 560.1 L515.0 553.2 L515.5 546.9 L516.0 561.5 L516.5 541.0 L517.0 531.1 L517.5 540.3 L518.0 539.2 L518.5 546.6 L519.0 578.5 L519.5 563.3 L520.0 498.9 L520.5 550.1 L521.0 538.8 L521.5 535.0 L522.0 519.8 L522.5 528.2 L523.0 507.8 L523.5 517.6 L524.0 555.1 L524.5 543.3 L525.0 525.6 L525.5 547.4 L526.0 541.5 L526.5 541.4 L527.0 542.4 L527.5 547.5 L528.0 545.0 L528.5 510.9 L529.0 544.0 L529.5 527.9 L530.0 525.9 L530.5 552.3 L531.0 546.8 L531.5 527.1 L532.0 552.7 L532.5 536.8 L533.0 552.5 L533.5 551.5 L534.0 549.0 L534.5 540.5 L535.0 555.7 L535.5 516.7 L536.0 534.4 L536.5 528.7 L537.0 520.3 L537.5 525.7 L538.0 532.8 L538.5 517.6 L539.0 552.1 L539.5 555.0 L540.0 561.6 L540.5 552.7 L541.0 556.6 L541.5 565.8 L542.0 538.3 L542.5 538.1 L543.0 591.7 L543.5 524.9 L544.0 566.5 L544.5 539.2 L545.0 565.9 L545.5 560.0 L546.0 511.0 L546.5 539.4 L547.0 571.3 L547.5 561.5 L548.0 524.9 L548.5 528.4 L549.0 542.7 L549.5 504.3 L550.0 513.0 L550.5 504.0 L551.0 531.7 L551.5 525.4 L552.0 566.0 L552.5 549.0 L553.0 565.9 L553.5 533.1 L554.0 536.5 L554.5 526.7 L555.0 565.8 L555.5 550.8 L556.0 550.5 L556.5 538.6 L557.0 538.7 L557.5 567.8 L558.0 568.0 L558.5 558.4 L559.0 489.1 L559.5 545.4 L560.0 535.7 L560.5 545.2 L561.0 561.5 L561.5 534.8 L562.0 535.1 L562.5 527.4 L563.0 543.4 L563.5 535.8 L564.0 543.2 L564.5 551.4 L565.0 554.4 L565.5 530.5 L566.0 533.4 L566.5 541.6 L567.0 537.4 L567.5 548.1 L568.0 509.5 L568.5 558.9 L569.0 509.5 L569.5 528.7 L570.0 528.7 L570.5 534.3 L571.0 521.2 L571.5 529.7 L572.0 540.3 L572.5 573.2 L573.0 530.4 L573.5 519.2 L574.0 539.8 L574.5 544.5 L575.0 528.6 L575.5 534.4 L576.0 513.8 L576.5 520.8 L577.0 548.5 L577.5 525.1 L578.0 545.0 L578.5 559.2 L579.0 547.7 L579.5 561.4 L580.0 565.0 L580.5 565.9 L581.0 533.5 L581.5 523.3 L582.0 556.8 L582.5 516.4 L583.0 547.4 L583.5 571.0 L584.0 542.3 L584.5 562.5 L585.0 544.1 L585.5 509.8 L586.0 540.9 L586.5 525.4 L587.0 509.8 L587.5 530.4 L588.0 498.2 L588.5 512.2 L589.0 528.9 L589.5 576.7 L590.0 539.6 L590.5 521.1 L591.0 515.1 L591.5 546.0 L592.0 550.3 L592.5 502.7 L593.0 511.0 L593.5 525.3 L594.0 499.1 L594.5 532.2 L595.0 568.6 L595.5 526.7 L596.0 539.6 L596.5 515.0 L597.0 523.8 L597.5 523.7 L598.0 516.6 L598.5 532.2 L599.0 530.8 L599.5 534.0 L600.0 522.1 L600.5 569.4 L601.0 551.3 L601.5 555.8 L602.0 571.5 L602.5 548.8 L603.0 554.6 L603.5 570.4 L604.0 599.9 L604.5 582.9 L605.0 525.0 L605.5 576.5 L606.0 553.3 L606.5 587.4 L607.0 558.7 L607.5 545.5 L608.0 563.4 L608.5 551.5 L609.0 565.5 L609.5 537.3 L610.0 534.0 L610.5 540.3 L611.0 523.9 L611.5 527.4 L612.0 515.7 L612.5 570.6 L613.0 539.6 L613.5 510.4 L614.0 521.9 L614.5 527.0 L615.0 528.4 L615.5 528.3 L616.0 507.8 L616.5 543.6 L617.0 536.0 L617.5 516.8 L618.0 525.1 L618.5 550.4 L619.0 515.2 L619.5 519.9 L620.0 528.7 L620.5 519.9 L621.0 522.6 L621.5 536.3 L622.0 534.2 L622.5 532.2 L623.0 524.5 L623.5 547.4 L624.0 548.0 L624.5 544.4 L625.0 537.3 L625.5 538.0 L626.0 540.6 L626.5 551.0 L627.0 512.8 L627.5 527.1 L628.0 525.3 L628.5 513.9 L629.0 501.9 L629.5 529.3 L630.0 531.1 L630.5 514.2 L631.0 530.7 L631.5 538.8 L632.0 523.5 L632.5 525.9 L633.0 551.2 L633.5 544.1 L634.0 508.6 L634.5 525.9 L635.0 517.7 L635.5 541.7 L636.0 511.8 L636.5 547.3 L637.0 506.0 L637.5 526.7 L638.0 488.0 L638.5 516.2 L639.0 484.8 L639.5 516.7 L640.0 485.8 L640.5 478.8 L641.0 480.2 L641.5 475.6 L642.0 481.7 L642.5 530.5 L643.0 495.4 L643.5 492.9 L644.0 497.2 L644.5 499.4 L645.0 506.1 L645.5 491.4 L646.0 495.4 L646.5 520.3 L647.0 510.9 L647.5 511.9 L648.0 496.1 L648.5 495.5 L649.0 547.5 L649.5 515.5 L650.0 510.1 L650.5 505.9 L651.0 512.2 L651.5 483.1 L652.0 490.2 L652.5 506.1 L653.0 496.1 L653.5 494.2 L654.0 488.8 L654.5 477.0 L655.0 496.9 L655.5 471.0 L656.0 481.1 L656.5 453.7 L657.0 498.0 L657.5 457.5 L658.0 471.5 L658.5 464.3 L659.0 477.6 L659.5 459.6 L660.0 466.0 L660.5 453.9 L661.0 448.5 L661.5 498.1 L662.0 467.3 L662.5 460.3 L663.0 442.3 L663.5 450.4 L664.0 455.5 L664.5 452.9 L665.0 485.0 L665.5 479.4 L666.0 457.9 L666.5 452.0 L667.0 461.7 L667.5 456.7 L668.0 450.2 L668.5 464.4 L669.0 463.3 L669.5 459.3 L670.0 466.4 L670.5 442.4 L671.0 474.8 L671.5 458.7 L672.0 455.9 L672.5 448.2 L673.0 462.2 L673.5 453.3 L674.0 463.8 L674.5 455.8 L675.0 460.3 L675.5 445.1 L676.0 441.2 L676.5 452.7 L677.0 434.5 L677.5 436.8 L678.0 439.5 L678.5 430.5 L679.0 428.8 L679.5 404.5 L680.0 425.6 L680.5 403.1 L681.0 409.4 L681.5 408.9 L682.0 381.7 L682.5 393.0 L683.0 396.4 L683.5 378.3 L684.0 370.4 L684.5 382.6 L685.0 366.6 L685.5 357.9 L686.0 359.3 L686.5 339.0 L687.0 345.9 L687.5 336.2 L688.0 322.7 L688.5 321.3 L689.0 308.0 L689.5 309.2 L690.0 300.7 L690.5 289.9 L691.0 290.1 L691.5 269.4 L692.0 269.5 L692.5 259.6 L693.0 258.0 L693.5 243.8 L694.0 223.2 L694.5 211.0 L695.0 254.7 L695.5 265.4 L696.0 258.9 L696.5 269.7 L697.0 282.9 L697.5 273.8 L698.0 288.3 L698.5 288.1 L699.0 294.3 L699.5 285.8 L700.0 296.2 L700.5 288.7 L701.0 315.6 L701.5 309.4 L702.0 323.3 L702.5 310.2 L703.0 326.8 L703.5 334.4 L704.0 331.8 L704.5 319.6 L705.0 366.0 L705.5 359.2 L706.0 346.0 L706.5 353.3 L707.0 372.6 L707.5 367.7 L708.0 368.0 L708.5 374.5 L709.0 391.8 L709.5 399.6 L710.0 399.4 L710.5 421.6 L711.0 413.4 L711.5 391.1 L712.0 408.5 L712.5 388.4 L713.0 394.0 L713.5 398.9 L714.0 401.7 L714.5 407.6 L715.0 399.0 L715.5 380.5 L716.0 356.9 L716.5 396.4 L717.0 397.8 L717.5 410.9 L718.0 414.5 L718.5 426.4 L719.0 408.6 L719.5 403.0 L720.0 427.9 L720.5 430.4 L721.0 426.2 L721.5 424.7 L722.0 423.0 L722.5 441.9 L723.0 444.4 L723.5 438.2 L724.0 424.3 L724.5 457.6 L725.0 424.5 L725.5 433.8 L726.0 441.1 L726.5 451.0 L727.0 454.3 L727.5 402.2 L728.0 429.6 L728.5 412.5 L729.0 452.0 L729.5 443.2 L730.0 466.9 L730.5 428.0 L731.0 435.3 L731.5 453.0 L732.0 426.5 L732.5 426.1 L733.0 400.4 L733.5 418.5 L734.0 438.7 L734.5 429.2 L735.0 435.2 L735.5 422.0 L736.0 428.8 L736.5 454.5 L737.0 428.2 L737.5 429.9 L738.0 431.4 L738.5 464.5 L739.0 427.4 L739.5 433.2 L740.0 467.2 L740.5 444.7 L741.0 406.7 L741.5 473.0 L742.0 407.2 L742.5 441.2 L743.0 408.9 L743.5 393.9 L744.0 395.0 L744.5 401.5 L745.0 429.1 L745.5 404.6 L746.0 433.4 L746.5 380.4 L747.0 438.9 L747.5 395.8 L748.0 404.4 L748.5 403.6 L749.0 403.0 L749.5 408.4 L750.0 401.8 L750.5 393.0 L751.0 414.5 L751.5 383.7 L752.0 391.6 L752.5 398.4 L753.0 420.3 L753.5 372.8 L754.0 390.8 L754.5 405.6 L755.0 387.7 L755.5 379.9 L756.0 397.3 L756.5 406.1 L757.0 398.0 L757.5 398.4 L758.0 391.2 L758.5 378.0 L759.0 370.9 L759.5 376.0 L760.0 380.3 L760.5 381.3 L761.0 364.3 L761.5 382.5 L762.0 372.3 L762.5 386.4 L763.0 373.3 L763.5 365.1 L764.0 370.6 L764.5 371.8 L765.0 355.3 L765.5 370.7 L766.0 403.7 L766.5 361.8 L767.0 375.9 L767.5 356.1 L768.0 338.6 L768.5 351.4 L769.0 307.6 L769.5 353.2 L770.0 331.6 L770.5 314.8 L771.0 286.7 L771.5 288.3 L772.0 337.4 L772.5 340.2 L773.0 307.3 L773.5 311.2 L774.0 315.0 L774.5 271.6 L775.0 290.1 L775.5 321.9 L776.0 292.5 L776.5 280.4 L777.0 300.2 L777.5 282.8 L778.0 309.5 L778.5 302.9 L779.0 278.7 L779.5 320.8 L780.0 329.5 L780.5 276.3 L781.0 296.9 L781.5 347.0 L782.0 288.4 L782.5 307.2 L783.0 317.2 L783.5 270.1 L784.0 285.1 L784.5 244.0 L785.0 290.0 L785.5 302.7 L786.0 270.6 L786.5 282.6 L787.0 269.2 L787.5 312.4 L788.0 289.7 L788.5 278.6 L789.0 318.8 L789.5 349.4 L790.0 285.7 L790.5 334.5 L791.0 276.6 L791.5 316.8 L792.0 330.0 L792.5 323.3 L793.0 332.6 L793.5 261.1 L794.0 304.6 L794.5 318.0 L795.0 313.7 L795.5 275.1 L796.0 311.8 L796.5 312.0 L797.0 274.0 L797.5 261.3 L798.0 338.7 L798.5 327.2 L799.0 276.4 L799.5 298.2 L800.0 288.4 L800.5 309.1 L801.0 287.4 L801.5 297.8 L802.0 303.7 L802.5 300.4 L803.0 322.8 L803.5 318.1 L804.0 292.8 L804.5 334.8 L805.0 309.0 L805.5 313.9 L806.0 315.1 L806.5 341.1 L807.0 306.9 L807.5 318.8 L808.0 333.4 L808.5 333.9 L809.0 329.8 L809.5 324.5 L810.0 348.6 L810.5 331.1 L811.0 327.6 L811.5 330.5 L812.0 332.8 L812.5 346.3 L813.0 347.0 L813.5 330.5 L814.0 346.2 L814.5 307.7 L815.0 333.9 L815.5 338.4 L816.0 315.2 L816.5 385.5 L817.0 377.5 L817.5 344.0 L818.0 356.5 L818.5 363.5 L819.0 367.0 L819.5 365.5 L820.0 342.6 L820.5 325.2 L821.0 351.0 L821.5 387.9 L822.0 384.9 L822.5 365.2 L823.0 389.9 L823.5 398.9 L824.0 359.1 L824.5 401.7 L825.0 380.0 L825.5 390.2 L826.0 375.8 L826.5 407.7 L827.0 369.1 L827.5 392.9 L828.0 349.4 L828.5 375.6 L829.0 377.1 L829.5 396.9 L830.0 383.2 L830.5 372.5 L831.0 370.6 L831.5 362.8 L832.0 352.5 L832.5 374.6 L833.0 374.8 L833.5 357.8 L834.0 345.7 L834.5 328.6 L835.0 344.5 L835.5 337.1 L836.0 395.3 L836.5 331.7 L837.0 372.1 L837.5 355.6 L838.0 370.7 L838.5 350.0 L839.0 372.4 L839.5 354.9 L840.0 360.7 L840.5 351.1 L841.0 383.1 L841.5 375.3 L842.0 345.4 L842.5 352.5 L843.0 336.2 L843.5 334.9 L844.0 336.6 L844.5 310.5 L845.0 331.4 L845.5 339.0 L846.0 327.3 L846.5 347.1 L847.0 335.0 L847.5 335.1 L848.0 321.7 L848.5 322.3 L849.0 320.5 L849.5 329.4 L850.0 322.4 L850.5 326.9 L851.0 302.4 L851.5 335.9 L852.0 341.9 L852.5 309.9 L853.0 345.0 L853.5 336.0 L854.0 324.3 L854.5 345.2 L855.0 319.5 L855.5 323.2 L856.0 342.0 L856.5 354.0 L857.0 339.1 L857.5 374.5 L858.0 345.5 L858.5 376.4 L859.0 333.4 L859.5 371.5 L860.0 363.0 L860.5 362.7 L861.0 378.7 L861.5 416.3 L862.0 402.6 L862.5 392.3 L863.0 387.6 L863.5 367.7 L864.0 362.5 L864.5 369.5 L865.0 336.5 L865.5 390.6 L866.0 388.0 L866.5 360.1 L867.0 360.6 L867.5 363.7 L868.0 361.4 L868.5 366.1 L869.0 329.6 L869.5 349.6 L870.0 354.5 L870.5 344.4 L871.0 373.7 L871.5 377.5 L872.0 390.0 L872.5 366.5 L873.0 342.6 L873.5 397.7 L874.0 369.1 L874.5 369.6 L875.0 386.9 L875.5 343.0 L876.0 342.8 L876.5 377.5 L877.0 352.0 L877.5 338.4 L878.0 384.6 L878.5 357.8 L879.0 347.5 L879.5 378.2 L880.0 342.9 L880.5 343.5 L881.0 345.5 L881.5 342.8 L882.0 361.3 L882.5 374.6 L883.0 364.4 L883.5 348.4 L884.0 359.7 L884.5 384.7 L885.0 414.5 L885.5 393.2 L886.0 383.0 L886.5 405.1 L887.0 382.7 L887.5 399.4 L888.0 415.8 L888.5 441.5 L889.0 422.7 L889.5 435.4 L890.0 425.8 L890.5 377.2 L891.0 388.7 L891.5 439.5 L892.0 424.5 L892.5 410.1 L893.0 384.0 L893.5 400.4 L894.0 350.9 L894.5 400.6 L895.0 422.6 L895.5 384.4 L896.0 337.3 L896.5 385.1 L897.0 385.5 L897.5 387.7 L898.0 402.5 L898.5 383.0 L899.0 388.6 L899.5 399.3 L900.0 424.4 L900.5 398.8 L901.0 411.2 L901.5 400.9 L902.0 371.0 L902.5 385.7 L903.0 386.6 L903.5 400.2 L904.0 385.2 L904.5 378.9 L905.0 403.6 L905.5 380.8 L906.0 435.2 L906.5 397.8 L907.0 376.1 L907.5 393.1 L908.0 390.9 L908.5 359.5 L909.0 380.3 L909.5 375.3 L910.0 367.5 L910.5 384.3 L911.0 394.6 L911.5 392.6 L912.0 384.1 L912.5 371.9 L913.0 363.7 L913.5 381.1 L914.0 382.8 L914.5 402.0 L915.0 341.3 L915.5 381.0 L916.0 366.0 L916.5 374.3 L917.0 400.8 L917.5 363.8 L918.0 406.1 L918.5 359.9 L919.0 372.8 L919.5 336.3 L920.0 364.6 L920.5 384.5 L921.0 371.0 L921.5 374.3 L922.0 365.2 L922.5 348.5 L923.0 350.9 L923.5 338.8 L924.0 333.3 L924.5 351.9 L925.0 360.1 L925.5 348.9 L926.0 328.0 L926.5 343.9 L927.0 334.8 L927.5 320.1 L928.0 333.2 L928.5 351.4 L929.0 343.2 L929.5 336.7 L930.0 344.3 L930.5 353.9 L931.0 341.4 L931.5 377.3 L932.0 368.8 L932.5 374.8 L933.0 380.7 L933.5 387.7 L934.0 365.2 L934.5 400.8 L935.0 377.6 L935.5 382.9 L936.0 399.2 L936.5 368.4 L937.0 392.2 L937.5 409.8 L938.0 375.3 L938.5 363.3 L939.0 410.1 L939.5 378.6 L940.0 368.9 L940.5 369.0 L941.0 417.9 L941.5 383.0 L942.0 394.3 L942.5 349.3 L943.0 368.3 L943.5 385.0 L944.0 368.0 L944.5 386.3 L945.0 348.2 L945.5 358.2 L946.0 394.8 L946.5 345.4 L947.0 351.5 L947.5 401.7 L948.0 353.4 L948.5 378.6 L949.0 346.5 L949.5 359.4 L950.0 379.2 L950.5 370.5 L951.0 372.2 L951.5 397.4 L952.0 420.4 L952.5 409.1 L953.0 380.1 L953.5 383.3 L954.0 384.3 L954.5 423.9 L955.0 420.9 L955.5 431.3 L956.0 404.0 L956.5 426.4 L957.0 447.2 L957.5 419.8 L958.0 422.5 L958.5 398.5 L959.0 439.4 L959.5 447.7 L960.0 431.3 L960.5 460.3 L961.0 419.4 L961.5 436.0 L962.0 441.8 L962.5 425.5 L963.0 444.4 L963.5 434.2 L964.0 409.6 L964.5 413.1 L965.0 358.6 L965.5 412.3 L966.0 443.7 L966.5 403.3 L967.0 405.1 L967.5 466.7 L968.0 385.0 L968.5 401.5 L969.0 391.7 L969.5 398.8 L970.0 400.1 L970.5 451.1 L971.0 427.3 L971.5 417.0 L972.0 432.2 L972.5 422.7 L973.0 427.5 L973.5 438.7 L974.0 454.6 L974.5 431.0 L975.0 416.2 L975.5 460.9 L976.0 470.6 L976.5 482.2 L977.0 444.3 L977.5 447.4 L978.0 469.6 L978.5 429.5 L979.0 437.8 L979.5 425.7 L980.0 420.6 L980.5 390.6 L981.0 407.3 L981.5 449.7 L982.0 410.1 L982.5 399.5 L983.0 423.0 L983.5 449.6 L984.0 426.9 L984.5 433.0 L985.0 443.6 L985.5 401.5 L986.0 408.9 L986.5 444.5 L987.0 425.7 L987.5 381.9 L988.0 423.0 L988.5 462.6 L989.0 388.2 L989.5 413.6 L990.0 442.0 L990.5 397.1 L991.0 416.9 L991.5 410.6 L992.0 428.0 L992.5 422.3 L993.0 424.7 L993.5 406.6 L994.0 411.8 L994.5 390.9 L995.0 391.4 L995.5 448.2 L996.0 427.2 L996.5 438.5 L997.0 416.1 L997.5 426.6 L998.0 392.7 L998.5 460.0 L999.0 436.6 L999.5 412.5 L1000.0 421.0 L1000.5 449.3 L1001.0 450.3 L1001.5 422.8 L1002.0 400.1 L1002.5 427.6 L1003.0 424.0 L1003.5 449.0 L1004.0 381.4 L1004.5 412.6 L1005.0 440.2 L1005.5 442.3 L1006.0 479.7 L1006.5 454.8 L1007.0 481.4 L1007.5 461.3 L1008.0 376.4 L1008.5 402.0 L1009.0 446.8 L1009.5 439.4 L1010.0 438.2 L1010.5 459.0 L1011.0 447.5 L1011.5 500.9 L1012.0 447.1 L1012.5 442.6 L1013.0 422.9 L1013.5 441.1 L1014.0 432.9 L1014.5 481.7 L1015.0 436.6 L1015.5 459.9 L1016.0 463.7 L1016.5 473.3 L1017.0 418.4 L1017.5 488.0 L1018.0 433.7 L1018.5 429.1 L1019.0 461.9 L1019.5 427.6 L1020.0 429.0 L1020.5 434.8 L1021.0 444.9 L1021.5 456.9 L1022.0 417.6 L1022.5 415.3 L1023.0 474.3 L1023.5 428.4 L1024.0 450.8 L1024.5 435.7 L1025.0 419.9 L1025.5 453.4 L1026.0 425.3 L1026.5 433.3 L1027.0 433.2 L1027.5 439.0 L1028.0 434.9 L1028.5 446.4 L1029.0 429.4 L1029.5 406.6 L1030.0 447.1 L1030.5 444.9 L1031.0 448.1 L1031.5 443.9 L1032.0 428.8 L1032.5 420.6 L1033.0 429.7 L1033.5 430.2 L1034.0 422.7 L1034.5 426.9 L1035.0 403.2 L1035.5 418.1 L1036.0 409.7 L1036.5 401.9 L1037.0 442.6 L1037.5 400.9 L1038.0 429.8 L1038.5 435.0 L1039.0 425.5 L1039.5 427.9 L1040.0 402.4 L1040.5 412.5 L1041.0 392.7 L1041.5 403.1 L1042.0 392.8 L1042.5 425.0 L1043.0 424.7 L1043.5 441.3 L1044.0 431.7 L1044.5 413.3 L1045.0 406.4 L1045.5 421.2 L1046.0 430.3 L1046.5 440.3 L1047.0 429.9 L1047.5 418.6 L1048.0 431.2 L1048.5 406.4 L1049.0 426.0 L1049.5 429.9 L1050.0 433.8 L1050.5 410.2 L1051.0 432.7 L1051.5 436.2 L1052.0 417.0 L1052.5 422.7 L1053.0 421.0 L1053.5 429.5 L1054.0 447.3 L1054.5 381.1 L1055.0 478.8 L1055.5 464.9 L1056.0 462.7 L1056.5 446.7 L1057.0 420.4 L1057.5 477.8 L1058.0 415.1 L1058.5 414.7 L1059.0 409.2 L1059.5 433.8 L1060.0 415.9 L1060.5 374.3 L1061.0 420.8 L1061.5 387.7 L1062.0 432.0 L1062.5 411.3 L1063.0 397.5 L1063.5 432.2 L1064.0 398.5 L1064.5 422.7 L1065.0 401.4 L1065.5 438.0 L1066.0 433.9 L1066.5 456.9 L1067.0 433.6 L1067.5 399.1 L1068.0 430.0 L1068.5 422.0 L1069.0 404.0 L1069.5 418.9 L1070.0 438.1 L1070.5 447.6 L1071.0 424.3 L1071.5 425.6 L1072.0 431.2 L1072.5 461.8 L1073.0 385.5 L1073.5 476.5 L1074.0 453.5 L1074.5 432.1 L1075.0 458.8 L1075.5 419.8 L1076.0 463.5 L1076.5 442.5 L1077.0 411.3 L1077.5 432.0 L1078.0 464.9 L1078.5 424.7 L1079.0 438.5 L1079.5 449.2 L1080.0 448.1 L1080.5 449.9 L1081.0 416.3 L1081.5 456.9 L1082.0 455.6 L1082.5 437.4 L1083.0 442.4 L1083.5 436.5 L1084.0 432.9 L1084.5 432.8 L1085.0 448.0 L1085.5 409.9 L1086.0 413.3 L1086.5 375.3 L1087.0 409.7 L1087.5 426.9 L1088.0 410.3 L1088.5 429.5 L1089.0 393.3 L1089.5 387.9 L1090.0 398.0 L1090.5 395.3 L1091.0 377.8 L1091.5 391.5 L1092.0 434.6 L1092.5 410.2 L1093.0 388.5 L1093.5 387.0 L1094.0 411.1 L1094.5 432.0 L1095.0 456.1 L1095.5 421.1 L1096.0 439.8 L1096.5 425.4 L1097.0 442.8 L1097.5 413.9 L1098.0 402.1 L1098.5 453.6 L1099.0 426.4 L1099.5 418.2 L1100.0 441.6 L1100.5 419.8 L1101.0 441.7 L1101.5 447.5 L1102.0 432.4 L1102.5 414.8 L1103.0 411.2 L1103.5 421.5 L1104.0 422.9 L1104.5 420.4 L1105.0 415.0 L1105.5 397.2 L1106.0 403.1 L1106.5 393.8 L1107.0 446.8 L1107.5 399.2 L1108.0 440.1 L1108.5 390.3 L1109.0 383.6 L1109.5 353.0 L1110.0 422.4 L1110.5 413.0 L1111.0 392.3 L1111.5 431.0 L1112.0 405.1 L1112.5 398.1 L1113.0 408.5 L1113.5 381.8 L1114.0 356.0 L1114.5 384.9 L1115.0 382.8 L1115.5 374.5 L1116.0 391.6 L1116.5 356.3 L1117.0 359.7 L1117.5 349.2 L1118.0 358.3 L1118.5 345.8 L1119.0 351.6 L1119.5 330.3 L1120.0 359.5 L1120.5 339.7 L1121.0 358.6 L1121.5 354.0 L1122.0 365.0 L1122.5 341.7 L1123.0 362.9 L1123.5 362.2 L1124.0 362.0 L1124.5 343.7 L1125.0 372.1 L1125.5 338.3 L1126.0 377.5 L1126.5 372.4 L1127.0 357.7 L1127.5 330.1 L1128.0 367.6 L1128.5 351.2 L1129.0 352.4 L1129.5 341.0 L1130.0 367.1 L1130.5 334.4 L1131.0 359.1 L1131.5 345.1 L1132.0 300.3 L1132.5 305.4 L1133.0 328.3 L1133.5 355.7 L1134.0 341.2 L1134.5 326.5 L1135.0 395.6 L1135.5 361.2 L1136.0 364.3 L1136.5 365.6 L1137.0 359.2 L1137.5 343.5 L1138.0 382.8 L1138.5 402.1 L1139.0 367.8 L1139.5 391.2 L1140.0 363.4 L1140.5 367.3 L1141.0 371.1 L1141.5 399.9 L1142.0 354.2 L1142.5 362.8 L1143.0 355.0 L1143.5 374.7 L1144.0 329.3 L1144.5 352.3 L1145.0 407.5 L1145.5 362.2 L1146.0 369.5 L1146.5 347.7 L1147.0 357.5 L1147.5 378.4 L1148.0 345.9 L1148.5 371.7 L1149.0 371.7 L1149.5 417.3 L1150.0 393.8 L1150.5 405.3 L1151.0 364.2 L1151.5 381.4 L1152.0 341.0 L1152.5 356.9 L1153.0 374.3 L1153.5 310.7 L1154.0 381.5 L1154.5 376.7 L1155.0 366.5 L1155.5 373.7 L1156.0 327.9 L1156.5 364.2 L1157.0 340.0 L1157.5 328.5 L1158.0 314.0 L1158.5 355.9 L1159.0 310.3 L1159.5 378.5 L1160.0 353.0 L1160.5 333.1 L1161.0 329.0 L1161.5 357.4 L1162.0 339.4 L1162.5 334.6 L1163.0 387.6 L1163.5 351.8 L1164.0 355.7 L1164.5 356.0 L1165.0 390.9 L1165.5 365.9 L1166.0 363.5 L1166.5 343.6 L1167.0 387.1 L1167.5 391.5 L1168.0 339.9 L1168.5 342.6 L1169.0 377.2 L1169.5 372.7 L1170.0 370.3 L1170.5 361.7 L1171.0 361.3 L1171.5 345.9 L1172.0 390.6 L1172.5 373.6 L1173.0 370.3 L1173.5 370.2 L1174.0 376.7 L1174.5 351.1 L1175.0 372.7 L1175.5 359.4 L1176.0 348.7 L1176.5 338.4 L1177.0 357.4 L1177.5 348.9 L1178.0 360.5 L1178.5 334.8 L1179.0 386.6 L1179.5 379.3 L1180.0 304.5 L1180.5 352.5 L1181.0 365.5 L1181.5 333.3 L1182.0 394.4 L1182.5 336.8 L1183.0 337.8 L1183.5 368.5 L1184.0 329.2 L1184.5 350.6 L1185.0 350.1 L1185.5 336.9 L1186.0 331.4 L1186.5 337.8 L1187.0 351.0 L1187.5 366.8 L1188.0 348.6 L1188.5 329.1 L1189.0 347.5 L1189.5 313.1 L1190.0 374.4 L1190.5 372.5 L1191.0 352.7 L1191.5 344.5 L1192.0 351.9 L1192.5 322.0 L1193.0 330.0 L1193.5 343.3 L1194.0 345.5 L1194.5 339.8 L1195.0 345.6 L1195.5 358.4 L1196.0 350.9 L1196.5 321.5 L1197.0 338.2 L1197.5 279.3 L1198.0 327.7 L1198.5 322.2 L1199.0 302.2 L1199.5 267.3 L1200.0 302.3 L1200.5 296.8 L1201.0 296.2 L1201.5 269.0 L1202.0 257.5 L1202.5 257.4 L1203.0 254.4 L1203.5 236.0 L1204.0 260.5 L1204.5 255.5 L1205.0 272.8 L1205.5 246.8 L1206.0 267.6 L1206.5 265.9 L1207.0 292.1 L1207.5 275.4 L1208.0 245.9 L1208.5 276.5 L1209.0 266.4 L1209.5 304.7 L1210.0 293.6 L1210.5 293.6 L1211.0 282.6 L1211.5 283.6 L1212.0 299.2 L1212.5 307.9 L1213.0 314.7 L1213.5 299.5 L1214.0 302.0 L1214.5 318.1 L1215.0 320.4 L1215.5 312.9 L1216.0 310.2 L1216.5 331.3 L1217.0 347.7 L1217.5 349.3 L1218.0 347.8 L1218.5 349.0 L1219.0 347.3 L1219.5 377.0 L1220.0 344.1 L1220.5 356.3 L1221.0 397.7 L1221.5 421.5 L1222.0 385.1 L1222.5 417.8 L1223.0 406.3 L1223.5 399.7 L1224.0 391.7 L1224.5 372.9 L1225.0 358.0 L1225.5 382.4 L1226.0 389.8 L1226.5 355.3 L1227.0 372.1 L1227.5 395.4 L1228.0 349.8 L1228.5 361.6 L1229.0 347.3 L1229.5 353.9 L1230.0 332.0 L1230.5 372.6 L1231.0 359.9 L1231.5 344.6 L1232.0 349.3 L1232.5 347.9 L1233.0 374.8 L1233.5 340.8 L1234.0 369.6 L1234.5 342.4 L1235.0 372.8 L1235.5 370.1 L1236.0 363.0 L1236.5 374.2 L1237.0 345.9 L1237.5 375.3 L1238.0 374.8 L1238.5 374.4 L1239.0 353.6 L1239.5 372.7 L1240.0 385.2 L1240.5 364.7 L1241.0 376.8 L1241.5 397.6 L1242.0 388.2 L1242.5 408.8 L1243.0 388.6 L1243.5 393.0 L1244.0 377.0 L1244.5 380.0 L1245.0 384.6 L1245.5 414.5 L1246.0 366.4 L1246.5 387.0 L1247.0 424.2 L1247.5 386.9 L1248.0 399.6 L1248.5 385.2 L1249.0 365.9 L1249.5 393.4 L1250.0 409.3 L1250.5 353.9 L1251.0 348.8 L1251.5 356.4 L1252.0 373.5 L1252.5 334.6 L1253.0 372.4 L1253.5 349.3 L1254.0 376.1 L1254.5 381.3 L1255.0 366.1 L1255.5 358.5 L1256.0 354.6 L1256.5 369.7 L1257.0 381.2 L1257.5 388.0 L1258.0 402.1 L1258.5 417.5 L1259.0 362.0 L1259.5 416.3 L1260.0 436.7 L1260.5 428.5 L1261.0 392.9 L1261.5 379.3 L1262.0 414.2 L1262.5 399.1 L1263.0 413.9 L1263.5 401.7 L1264.0 385.3 L1264.5 398.4 L1265.0 422.1 L1265.5 402.7 L1266.0 410.3 L1266.5 374.6 L1267.0 371.2 L1267.5 382.4 L1268.0 350.6 L1268.5 354.4 L1269.0 352.3 L1269.5 366.3 L1270.0 382.6 L1270.5 356.1 L1271.0 393.7 L1271.5 412.1 L1272.0 384.9 L1272.5 376.7 L1273.0 400.4 L1273.5 388.0 L1274.0 343.6 L1274.5 390.0 L1275.0 418.3 L1275.5 422.2 L1276.0 410.0 L1276.5 392.8 L1277.0 409.0 L1277.5 413.9 L1278.0 418.7 L1278.5 404.3 L1279.0 355.5 L1279.5 408.8 L1280.0 378.5 L1280.5 364.0 L1281.0 397.1 L1281.5 397.9 L1282.0 372.0 L1282.5 375.5 L1283.0 363.6 L1283.5 392.5 L1284.0 356.5 L1284.5 369.1 L1285.0 355.5 L1285.5 318.9 L1286.0 334.4 L1286.5 374.8 L1287.0 326.2 L1287.5 317.1 L1288.0 342.0 L1288.5 380.5 L1289.0 373.9 L1289.5 317.8 L1290.0 334.2 L1290.5 341.7 L1291.0 323.6 L1291.5 338.4 L1292.0 331.6 L1292.5 330.3 L1293.0 361.8 L1293.5 359.9 L1294.0 329.7 L1294.5 347.3 L1295.0 324.5 L1295.5 359.9 L1296.0 328.4 L1296.5 358.8 L1297.0 360.2 L1297.5 338.6 L1298.0 313.3 L1298.5 346.2 L1299.0 327.8 L1299.5 309.6 L1300.0 355.2 L1300.5 349.2 L1301.0 365.6 L1301.5 389.6 L1302.0 343.3 L1302.5 326.9 L1303.0 347.0 L1303.5 324.1 L1304.0 329.6 L1304.5 281.9 L1305.0 294.4 L1305.5 341.8 L1306.0 321.8 L1306.5 314.2 L1307.0 340.0 L1307.5 298.6 L1308.0 300.1 L1308.5 321.3 L1309.0 329.7 L1309.5 324.9 L1310.0 291.7 L1310.5 338.5 L1311.0 332.5 L1311.5 319.2 L1312.0 344.4 L1312.5 348.4 L1313.0 344.7 L1313.5 379.2 L1314.0 357.9 L1314.5 377.2 L1315.0 344.2 L1315.5 367.3 L1316.0 380.6 L1316.5 350.0 L1317.0 335.9 L1317.5 360.5 L1318.0 380.8 L1318.5 377.6 L1319.0 343.7 L1319.5 386.7 L1320.0 384.2 L1320.5 396.0 L1321.0 376.7 L1321.5 373.5 L1322.0 389.0 L1322.5 400.9 L1323.0 377.6 L1323.5 398.0 L1324.0 395.6 L1324.5 408.3 L1325.0 376.5 L1325.5 410.1 L1326.0 400.4 L1326.5 409.1 L1327.0 414.3 L1327.5 405.8 L1328.0 415.8 L1328.5 380.4 L1329.0 389.0 L1329.5 417.7 L1330.0 403.1 L1330.5 427.3 L1331.0 419.5 L1331.5 407.7 L1332.0 391.4 L1332.5 393.1 L1333.0 426.2 L1333.5 426.1 L1334.0 413.6 L1334.5 393.8 L1335.0 400.2 L1335.5 414.8 L1336.0 407.5 L1336.5 458.3 L1337.0 384.2 L1337.5 415.4 L1338.0 384.0 L1338.5 372.1 L1339.0 369.0 L1339.5 398.1 L1340.0 384.9 L1340.5 376.4 L1341.0 376.8 L1341.5 367.6 L1342.0 381.7 L1342.5 369.1 L1343.0 361.1 L1343.5 382.2 L1344.0 412.8 L1344.5 361.9 L1345.0 377.9 L1345.5 385.8 L1346.0 379.6 L1346.5 367.6 L1347.0 393.1 L1347.5 373.4 L1348.0 384.7 L1348.5 360.4 L1349.0 358.5 L1349.5 350.9 L1350.0 390.1 L1350.5 367.5 L1351.0 378.1" fill="none" stroke="#4d7eb5" stroke-width="1"/>
<line x1="691" y1="126" x2="691" y2="880" stroke="#999" stroke-width="1.3" stroke-dasharray="1.5 2.1"/>
<line x1="694.5" y1="179" x2="694.5" y2="211" stroke="#e53935" stroke-width="1"/>
<line x1="99.5" y1="783" x2="99.5" y2="814" stroke="#e53935" stroke-width="1"/>
<circle cx="691" cy="244.7" r="4.2" fill="none" stroke="#555" stroke-width="1.7"/>
<rect x="568" y="171.5" width="268" height="94" fill="none" stroke="#f26060" stroke-width="1.5"/>
<text x="594.5" y="213" font-family="Liberation Sans" font-size="12.75" fill="#d6a04c">2Theta: 2.61e+1, d-value: 4.29e-1</text>
<line x1="87" y1="125.5" x2="1352" y2="125.5" stroke="#333" stroke-width="1"/>
<line x1="1351.5" y1="125" x2="1351.5" y2="880" stroke="#555" stroke-width="1"/>
<line x1="87.25" y1="125" x2="87.25" y2="880.75" stroke="#3a3a3a" stroke-width="1.5"/>
<line x1="86.5" y1="880" x2="1352" y2="880" stroke="#3a3a3a" stroke-width="1.5"/>
</svg>

<!-- right panel -->
<div class="a" style="left:1356px;top:124px;width:446px;height:450px;box-shadow:0 1px 3px rgba(0,0,0,.2),0 1px 1px rgba(0,0,0,.14);background:#fff"></div>
<div class="a" style="left:1356px;top:124px;width:446px;height:65px;background:#ededed"></div>
<div class="a" style="left:1373px;top:149px;font-size:12px;line-height:16px;color:#333">Info</div>
<svg class="a" style="left:1773px;top:153px" width="10" height="7" viewBox="0 0 10 7"><path d="M1 5.5 L5 1.5 L9 5.5" fill="none" stroke="#666" stroke-width="1.4"/></svg>
<div class="a" style="left:1357px;top:189px;width:444px;height:36px;border-bottom:1px solid #eee;background:#fff"></div>
<div class="a" style="left:1382px;top:201px;font-size:14px;line-height:16px;color:#333;white-space:nowrap"><b>Title :</b><span style="margin-left:3px">xrd_jcamp_2</span></div>
<div class="a" style="left:1357px;top:480px;width:444px;height:44px;background:#fafafa;border-top:1px solid #f0f0f0"></div>
<div class="a" style="left:1356px;top:524px;width:446px;height:50px;background:#ededed;box-shadow:0 1px 2px rgba(0,0,0,.3)"></div>
<div class="a" style="left:1373px;top:542px;font-size:12px;line-height:16px;color:#333;white-space:nowrap">Spectra Comparisons</div>
<svg class="a" style="left:1773px;top:546px" width="10" height="7" viewBox="0 0 10 7"><path d="M1 1.5 L5 5.5 L9 1.5" fill="none" stroke="#666" stroke-width="1.4"/></svg>
</body></html>
